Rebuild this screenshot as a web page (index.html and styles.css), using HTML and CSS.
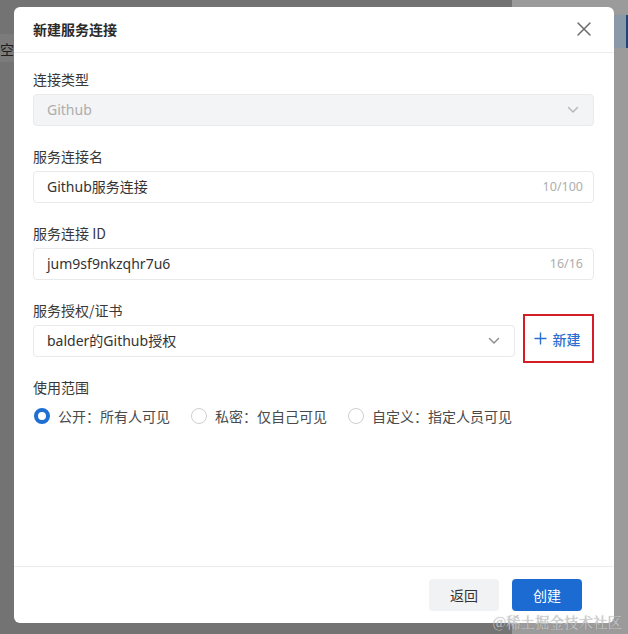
FILE: index.html
```html
<!DOCTYPE html>
<html lang="zh-CN">
<head>
<meta charset="utf-8">
<title>新建服务连接</title>
<link rel="stylesheet" href="styles.css">
</head>
<body>
<div class="page-tab-left">空</div>
<div class="page-tab-right"></div>

<div class="modal">
  <div class="modal-header">
    <span class="modal-title">新建服务连接</span>
    <button class="close-btn" aria-label="关闭">
      <svg width="16" height="16" viewBox="0 0 16 16"><path d="M2 2 L14 14 M14 2 L2 14" stroke="#6b6b6b" stroke-width="1.5" stroke-linecap="round" fill="none"/></svg>
    </button>
  </div>

  <div class="modal-body">
    <div class="form-item">
      <div class="label">连接类型</div>
      <div class="field select disabled">
        <span class="value">Github</span>
        <svg class="chevron" width="12" height="8" viewBox="0 0 12 8"><path d="M1.5 1.5 L6 6 L10.5 1.5" stroke="#b5b5b5" stroke-width="1.4" fill="none" stroke-linecap="round" stroke-linejoin="round"/></svg>
      </div>
    </div>

    <div class="form-item">
      <div class="label">服务连接名</div>
      <div class="field">
        <span class="value">Github服务连接</span>
        <span class="count">10/100</span>
      </div>
    </div>

    <div class="form-item">
      <div class="label">服务连接 ID</div>
      <div class="field">
        <span class="value">jum9sf9nkzqhr7u6</span>
        <span class="count">16/16</span>
      </div>
    </div>

    <div class="form-item">
      <div class="label">服务授权/证书</div>
      <div class="field-row">
        <div class="field select grow">
          <span class="value">balder的Github授权</span>
          <svg class="chevron" width="12" height="8" viewBox="0 0 12 8"><path d="M1.5 1.5 L6 6 L10.5 1.5" stroke="#8a8a8a" stroke-width="1.4" fill="none" stroke-linecap="round" stroke-linejoin="round"/></svg>
        </div>
        <button class="new-btn">
          <svg width="13" height="13" viewBox="0 0 13 13"><path d="M6.5 0.5 V12.5 M0.5 6.5 H12.5" stroke="#2a6fd0" stroke-width="1.4" fill="none"/></svg>
          <span>新建</span>
        </button>
      </div>
    </div>

    <div class="form-item">
      <div class="label">使用范围</div>
      <div class="radio-group">
        <label class="radio checked"><span class="dot"></span><span>公开：所有人可见</span></label>
        <label class="radio"><span class="dot"></span><span>私密：仅自己可见</span></label>
        <label class="radio"><span class="dot"></span><span>自定义：指定人员可见</span></label>
      </div>
    </div>
  </div>

  <div class="modal-footer">
    <button class="btn btn-default">返回</button>
    <button class="btn btn-primary">创建</button>
  </div>
</div>

<div class="watermark">@稀土掘金技术社区</div>
</body>
</html>
```

FILE: styles.css
```css
* { box-sizing: border-box; }

html, body {
  margin: 0;
  padding: 0;
  height: 100%;
}

body {
  position: relative;
  overflow: hidden;
  font-family: "Noto Sans", "Noto Sans CJK SC", sans-serif;
  font-size: 14px;
  color: #333;
  background: linear-gradient(to right, #737373 0, #737373 512px, #9b9b9b 512px);
}

.page-tab-left {
  position: absolute;
  left: 0;
  top: 34px;
  width: 14px;
  height: 28px;
  background: #7b7b7b;
  color: #1e1e1e;
  font-family: "Noto Sans CJK SC", sans-serif;
  font-size: 14px;
  line-height: 30px;
  overflow: hidden;
  white-space: nowrap;
}

.page-tab-right {
  position: absolute;
  right: 0;
  top: 15px;
  width: 14px;
  height: 33px;
  background: #8999a8;
  border-right: 2px solid #1f437c;
}

.modal {
  position: relative;
  width: 600px;
  height: 616px;
  margin: 7px auto 0;
  background: #fff;
  border-radius: 6px;
  display: flex;
  flex-direction: column;
}

.modal-header {
  height: 46px;
  padding: 0 20px 0 19px;
  display: flex;
  align-items: center;
  justify-content: space-between;
  border-bottom: 1px solid #ececec;
}

.modal-title {
  font-family: "Noto Sans CJK SC", sans-serif;
  font-size: 14px;
  font-weight: 600;
  color: #2b2b2b;
  margin-top: -1px;
}

.close-btn {
  width: 20px;
  height: 20px;
  padding: 0;
  border: 0;
  background: none;
  display: flex;
  align-items: center;
  justify-content: center;
  margin-top: -1px;
}

.modal-body {
  flex: 1;
  padding: 17px 20px 0 19px;
}

.form-item {
  line-height: 20px;
}

.form-item + .form-item {
  margin-top: 21px;
}

.label {
  font-family: "Noto Sans CJK SC", sans-serif;
  font-size: 14px;
  line-height: 20px;
  height: 20px;
  color: #383838;
  margin-bottom: 4px;
  margin-top: -1px;
  padding-bottom: 1px;
  box-sizing: content-box;
}

.field {
  height: 32px;
  border: 1px solid #e8e9eb;
  border-radius: 4px;
  display: flex;
  align-items: center;
  padding: 0 10px 0 13px;
  background: #fff;
}

.field .value {
  flex: 1;
  color: #333;
  font-size: 14px;
  white-space: nowrap;
}

.field .count {
  color: #aeaeae;
  font-size: 12.5px;
}

.field.disabled {
  background: #f3f4f5;
  border-color: #e9eaec;
}

.field.disabled .value {
  color: #adadad;
}

.select {
  padding-right: 14px;
}

.chevron {
  flex: none;
}

.field-row {
  display: flex;
  align-items: flex-start;
  gap: 8px;
}

.grow {
  flex: 1;
}

.new-btn {
  width: 71px;
  height: 49px;
  margin: -11px 0 -6px;
  border: 2px solid #d21e24;
  background: #fff;
  color: #2a6fd0;
  font-family: "Noto Sans CJK SC", sans-serif;
  font-size: 14px;
  font-weight: 500;
  display: flex;
  align-items: center;
  justify-content: center;
  gap: 6px;
  padding: 0 3px 0 0;
}

.radio-group {
  display: flex;
  align-items: center;
  margin-top: 7px;
  height: 22px;
}

.radio {
  display: flex;
  align-items: center;
  margin-right: 20px;
  font-family: "Noto Sans CJK SC", sans-serif;
  font-size: 14px;
  color: #4a4a4a;
}

.radio .dot {
  width: 16px;
  height: 16px;
  border-radius: 50%;
  border: 1px solid #cfcfcf;
  margin: 0 8px 0 1px;
  background: #fff;
}

.radio.checked .dot {
  border: 4.5px solid #1f6ed4;
}

.modal-footer {
  height: 57px;
  border-top: 1px solid #ececec;
  display: flex;
  justify-content: flex-end;
  align-items: flex-start;
  padding: 12px 32px 0 0;
  gap: 13px;
}

.btn {
  width: 70px;
  height: 32px;
  border: 0;
  border-radius: 4px;
  font-family: "Noto Sans CJK SC", sans-serif;
  font-size: 14px;
}

.btn-default {
  background: #f1f2f4;
  color: #333;
}

.btn-primary {
  background: #1c6bd2;
  color: #fff;
}

.watermark {
  position: absolute;
  right: 6px;
  bottom: 2px;
  font-family: "Noto Serif CJK SC", "Noto Sans CJK SC", serif;
  font-size: 14.5px;
  color: rgba(205, 205, 205, 0.9);
  text-shadow: 0 0 1px rgba(120, 120, 120, 0.6);
}
```
